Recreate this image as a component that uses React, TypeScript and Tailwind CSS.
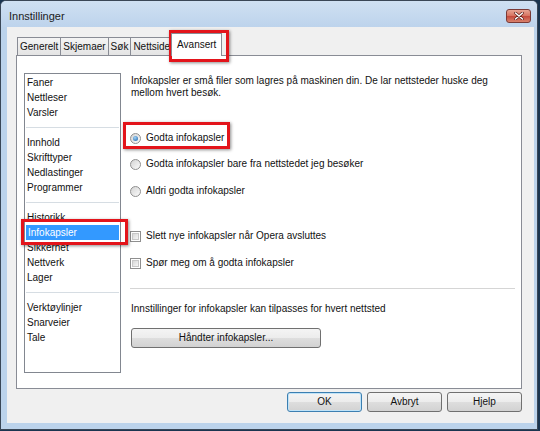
import React from "react";

const tabs = ["Generelt", "Skjemaer", "Søk", "Nettside"];

const sections: string[][] = [
  ["Faner", "Nettleser", "Varsler"],
  ["Innhold", "Skrifttyper", "Nedlastinger", "Programmer"],
  ["Historikk", "Infokapsler", "Sikkerhet", "Nettverk", "Lager"],
  ["Verktøylinjer", "Snarveier", "Tale"],
];

const Radio: React.FC<{ checked?: boolean }> = ({ checked }) => (
  <span className="w-[11px] h-[11px] shrink-0 rounded-full border border-[#8f8f8f] bg-[linear-gradient(135deg,#d4d4d4,#fbfbfb)] flex items-center justify-center">
    {checked && (
      <span className="w-[5px] h-[5px] rounded-full bg-[radial-gradient(circle_at_40%_35%,#9fd4f8,#1b5ea6)]" />
    )}
  </span>
);

const Checkbox: React.FC = () => (
  <span className="w-[11px] h-[11px] shrink-0 border border-[#8f8f8f] bg-white p-[1px]">
    <span className="block w-full h-full border border-[#c8c8c8] bg-[linear-gradient(135deg,#d8d8d8,#f6f6f6)]" />
  </span>
);

const Button: React.FC<{ label: string; primary?: boolean; className?: string }> = ({
  label,
  primary,
  className,
}) => (
  <div
    className={`h-[20px] rounded-[3px] border ${
      primary ? "border-[#3c7fb1] shadow-[inset_0_0_0_1px_#bfe3f8]" : "border-[#707070]"
    } bg-[linear-gradient(#f4f4f4_0%,#ececec_50%,#dedede_51%,#d2d2d2_100%)] flex items-center justify-center ${className ?? ""}`}
  >
    {label}
  </div>
);

const App: React.FC = () => {
  return (
    <div className="relative w-[540px] h-[431px] overflow-hidden bg-[#1a3550] text-[10px] leading-[12px] text-[#111] font-['Liberation_Sans',Arial,sans-serif]">
      <div className="w-[538px] h-[430px] border border-[#3a4756] rounded-t-[6px] bg-[#bcd3eb] flex flex-col">
        {/* title bar */}
        <header className="h-[26px] shrink-0 flex items-start justify-between pl-[8px] pr-[6px] rounded-t-[5px] bg-[linear-gradient(#cfe0f2,#bdd3ec)]">
          <span className="mt-[9px] text-[11px] leading-[13px] text-[#1b1b1b]">Innstillinger</span>
          <div className="mt-[8px] w-[25px] h-[14px] rounded-[3px] border border-[#7a3a36] bg-[linear-gradient(#e8a493_0%,#d7725f_50%,#c4483a_51%,#d9826d_100%)] flex items-center justify-center">
            <svg width="10" height="8" viewBox="0 0 10 8">
              <path d="M1.5 1 L8.5 7 M8.5 1 L1.5 7" stroke="#5a1a14" strokeWidth="2.8" strokeLinecap="round" />
              <path d="M1.5 1 L8.5 7 M8.5 1 L1.5 7" stroke="#ffffff" strokeWidth="1.6" strokeLinecap="round" />
            </svg>
          </div>
        </header>

        {/* dialog body */}
        <div className="ml-[6px] mr-[3px] h-[396px] bg-[#f0f0f0] flex flex-col">
          {/* tab strip */}
          <div className="h-[28px] flex items-end pl-[10px]">
            {tabs.map((t) => (
              <div
                key={t}
                className="h-[18px] px-[2px] border border-b-0 border-[#898c95] -ml-px first:ml-0 bg-[linear-gradient(#f4f4f4,#e4e4e4)] flex items-center"
              >
                {t}
              </div>
            ))}
            <div className="relative z-10 -ml-[2px] -mb-px h-[23px] px-[5px] border border-b-0 border-[#898c95] bg-white flex items-center">
              Avansert
            </div>
          </div>

          {/* panel */}
          <div className="ml-[9px] w-[506px] h-[334px] border border-[#898c95] bg-white flex pt-[17px] pl-[7px]">
            <div className="w-[97px] h-[300px] border border-[#828790] bg-white flex flex-col pt-px leading-[15px]">
              {sections.map((group, gi) => (
                <React.Fragment key={gi}>
                  {gi > 0 && (
                    <div className="h-[15px] flex items-center px-[1px]">
                      <div className="w-full h-px bg-[#d6dde3]" />
                    </div>
                  )}
                  {group.map((item) =>
                    item === "Infokapsler" ? (
                      <div key={item} className="h-[15px] mx-[1px] pl-[2px] bg-[#3399ff] text-white">
                        {item}
                      </div>
                    ) : (
                      <div key={item} className="h-[15px] pl-[2px]">
                        {item}
                      </div>
                    )
                  )}
                </React.Fragment>
              ))}
            </div>

            <div className="ml-[9px] w-[385px] flex flex-col">
              <p className="mt-[2px] pl-px">
                Infokapsler er små filer som lagres på maskinen din. De lar nettsteder huske deg
                <br />
                mellom hvert besøk.
              </p>

              <label className="mt-[31px] h-[16px] flex items-center gap-[5px]">
                <Radio checked />
                Godta infokapsler
              </label>
              <label className="mt-[10px] h-[16px] flex items-center gap-[5px]">
                <Radio />
                Godta infokapsler bare fra nettstedet jeg besøker
              </label>
              <label className="mt-[11px] h-[16px] flex items-center gap-[5px]">
                <Radio />
                Aldri godta infokapsler
              </label>

              <label className="mt-[29px] h-[16px] flex items-center gap-[5px]">
                <Checkbox />
                Slett nye infokapsler når Opera avsluttes
              </label>
              <label className="mt-[11px] h-[16px] flex items-center gap-[5px]">
                <Checkbox />
                Spør meg om å godta infokapsler
              </label>

              <div className="mt-[17px] h-px bg-[#d5d5d5]" />

              <p className="mt-[14px] pl-px">Innstillinger for infokapsler kan tilpasses for hvert nettsted</p>

              <Button label="Håndter infokapsler..." className="mt-[13px] ml-px w-[190px]" />
            </div>
          </div>

          {/* footer buttons */}
          <div className="mt-[3px] flex justify-end gap-[5px] pr-[12px]">
            <Button label="OK" primary className="w-[75px]" />
            <Button label="Avbryt" className="w-[75px]" />
            <Button label="Hjelp" className="w-[75px]" />
          </div>
        </div>
      </div>

      {/* red annotation boxes */}
      <div className="absolute left-[169px] top-[30px] w-[60px] h-[32px] border-[3px] border-[#e3141b] shadow-[1px_1px_3px_rgba(0,0,0,0.45)]" />
      <div className="absolute left-[123px] top-[122px] w-[107px] h-[27px] border-[3px] border-[#e3141b] shadow-[1px_1px_3px_rgba(0,0,0,0.45)]" />
      <div className="absolute left-[21px] top-[219px] w-[107px] h-[26px] border-[3px] border-[#e3141b] shadow-[1px_1px_3px_rgba(0,0,0,0.45)]" />
    </div>
  );
};

export default App;
